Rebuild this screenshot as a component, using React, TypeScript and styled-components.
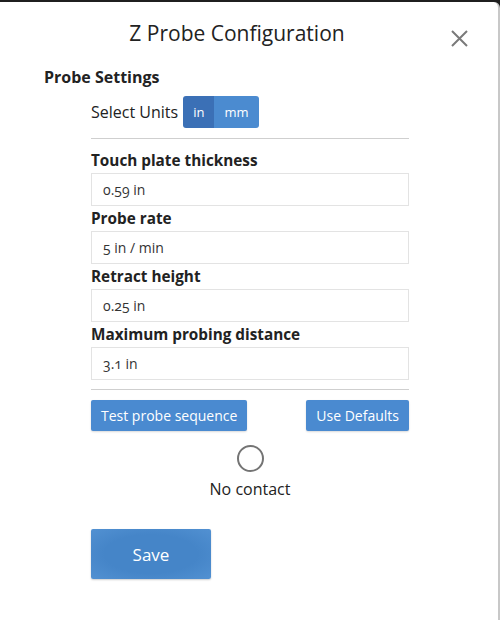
import React from "react";
import styled, { createGlobalStyle } from "styled-components";

const Global = createGlobalStyle`
  html, body { margin: 0; padding: 0; background: #1f1f1f; }
  body { font-family: "Open Sans", "Noto Sans", sans-serif; }
  * { box-sizing: border-box; }
`;

const Modal = styled.div`
  width: 500px;
  height: 620px;
  padding-top: 2px;
  background: #1f1f1f;
`;

const Panel = styled.div`
  height: 618px;
  background: #fff;
  border-radius: 0 6px 0 0;
  border-right: 2px solid #c8c8c8;
  display: flex;
  flex-direction: column;
`;

const Header = styled.div`
  position: relative;
  display: flex;
  justify-content: center;
  padding: 16px 24px 0 0;
  height: 60px;
`;

const Title = styled.h1`
  margin: 0;
  font-size: 21px;
  font-weight: 400;
  color: #222;
  line-height: 30px;
`;

const Close = styled.button`
  position: absolute;
  right: 29px;
  top: 27px;
  width: 19px;
  height: 19px;
  padding: 0;
  border: none;
  background: none;
  display: flex;
`;

const Body = styled.div`
  padding: 4px 89px 0 44px;
  display: flex;
  flex-direction: column;
`;

const SectionTitle = styled.h2`
  margin: 0;
  font-size: 16px;
  font-weight: 700;
  color: #222;
  line-height: 22px;
`;

const Content = styled.div`
  margin-left: 47px;
  display: flex;
  flex-direction: column;
`;

const UnitsRow = styled.div`
  display: flex;
  align-items: center;
  margin-top: 8px;
  gap: 5px;
`;

const UnitsLabel = styled.span`
  font-size: 16px;
  color: #222;
`;

const Toggle = styled.div`
  display: flex;
  border-radius: 3px;
  overflow: hidden;
  height: 32px;
`;

const ToggleBtn = styled.button<{ $active?: boolean }>`
  border: none;
  padding: 0 10px;
  font-family: inherit;
  font-size: 13px;
  color: #fff;
  background: ${(p) => (p.$active ? "#3b70b6" : "#4b8bd0")};
`;

const Divider = styled.hr<{ $gap?: number }>`
  border: none;
  border-top: 1px solid #cfcfcf;
  margin: ${(p) => p.$gap ?? 11}px 0 0;
  width: 318px;
`;

const Field = styled.div`
  display: flex;
  flex-direction: column;
`;

const Label = styled.label`
  font-size: 15.3px;
  font-weight: 700;
  color: #222;
  line-height: 22px;
  margin-bottom: 2px;
`;

const Input = styled.div`
  width: 318px;
  height: 33px;
  margin-bottom: 1px;
  border: 1px solid #e3e3e3;
  padding: 0 11px;
  display: flex;
  align-items: center;
  font-size: 14px;
  color: #333;
  font-variant-numeric: oldstyle-nums;
  font-feature-settings: "onum" 1;
`;

const FieldList = styled.div`
  display: flex;
  flex-direction: column;
  margin-top: 10px;
`;

const ActionRow = styled.div`
  width: 318px;
  display: flex;
  justify-content: space-between;
  margin-top: 10px;
`;

const Button = styled.button`
  height: 31px;
  padding: 0 10px;
  border: none;
  border-radius: 2px;
  background: #4a8ad0;
  color: #fff;
  font-family: inherit;
  font-size: 14px;
  box-shadow: 0 1px 2px rgba(0, 0, 0, 0.15);
`;

const Status = styled.div`
  width: 318px;
  display: flex;
  flex-direction: column;
  align-items: center;
  margin-top: 14px;
  gap: 6px;
`;

const Indicator = styled.div`
  width: 27px;
  height: 27px;
  border-radius: 50%;
  border: 2.5px solid #747474;
`;

const StatusText = styled.span`
  font-size: 16px;
  line-height: 22px;
  color: #222;
`;

const SaveButton = styled.button`
  margin-top: 29px;
  width: 120px;
  height: 50px;
  border: none;
  border-radius: 2px;
  background: radial-gradient(ellipse at center, #4585c8 55%, #5291d2 100%);
  color: #fff;
  font-family: inherit;
  font-size: 17px;
  box-shadow: 0 1px 2px rgba(0, 0, 0, 0.2);
`;

const fields = [
  { label: "Touch plate thickness", value: "0.59 in" },
  { label: "Probe rate", value: "5 in / min" },
  { label: "Retract height", value: "0.25 in" },
  { label: "Maximum probing distance", value: "3.1 in" },
];

export default function App() {
  return (
    <>
      <Global />
      <Modal>
        <Panel>
          <Header>
            <Title>Z Probe Configuration</Title>
            <Close aria-label="Close">
              <svg width="19" height="19" viewBox="0 0 19 19">
                <path d="M2 2 L17 17 M17 2 L2 17" stroke="#7a7a7a" strokeWidth="2" fill="none" />
              </svg>
            </Close>
          </Header>
          <Body>
            <SectionTitle>Probe Settings</SectionTitle>
            <Content>
              <UnitsRow>
                <UnitsLabel>Select Units</UnitsLabel>
                <Toggle>
                  <ToggleBtn $active>in</ToggleBtn>
                  <ToggleBtn>mm</ToggleBtn>
                </Toggle>
              </UnitsRow>
              <Divider $gap={10} />
              <FieldList>
                {fields.map((f) => (
                  <Field key={f.label}>
                    <Label>{f.label}</Label>
                    <Input>{f.value}</Input>
                  </Field>
                ))}
              </FieldList>
              <Divider $gap={8} />
              <ActionRow>
                <Button>Test probe sequence</Button>
                <Button>Use Defaults</Button>
              </ActionRow>
              <Status>
                <Indicator />
                <StatusText>No contact</StatusText>
              </Status>
              <SaveButton>Save</SaveButton>
            </Content>
          </Body>
        </Panel>
      </Modal>
    </>
  );
}
